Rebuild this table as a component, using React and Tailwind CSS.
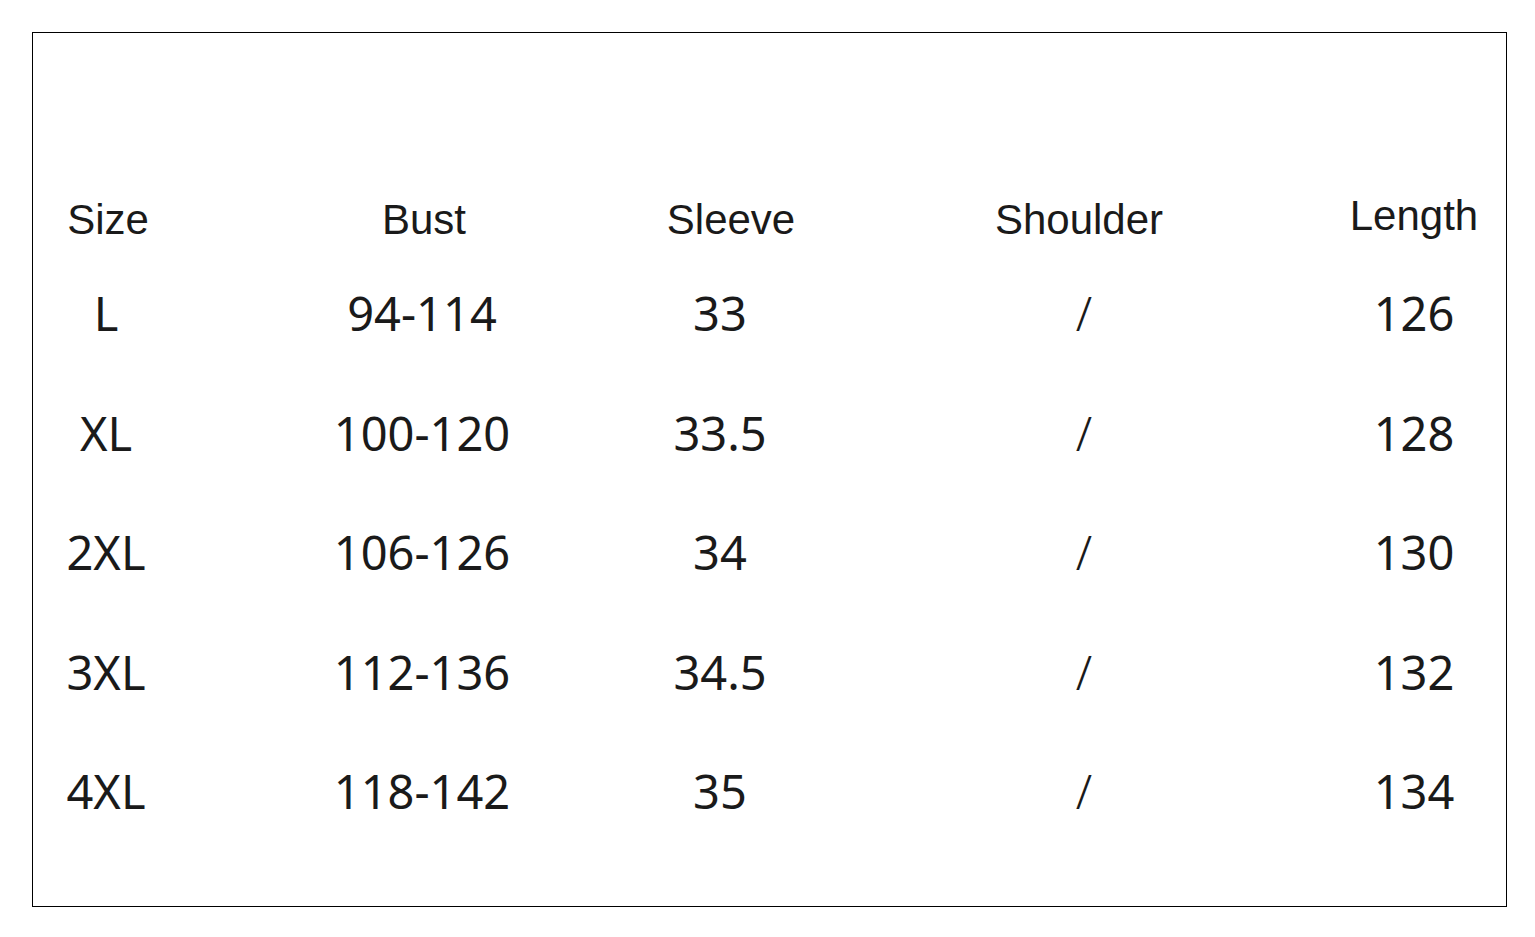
const headers = [
  { label: 'Size', cls: 'pl-[4px]' },
  { label: 'Bust', cls: 'pl-[4px]' },
  { label: 'Sleeve', cls: 'pl-[10px]' },
  { label: 'Shoulder', cls: 'pr-[4px]' },
  { label: 'Length', cls: '-translate-y-[4px]' },
];

const rows = [
  ['L', '94-114', '33', '/', '126'],
  ['XL', '100-120', '33.5', '/', '128'],
  ['2XL', '106-126', '34', '/', '130'],
  ['3XL', '112-136', '34.5', '/', '132'],
  ['4XL', '118-142', '35', '/', '134'],
];

// value offsets per column, to match the reference centers
const valueCls = ['', '', 'pr-[12px]', 'pl-[6px]', ''];

const cols = 'grid grid-cols-[150px_482px_126px_584px_82px] -ml-[2px]';

export default function App() {
  return (
    <div className="w-[1535px] h-[937px] bg-white pt-[32px] pl-[32px]">
      <div className="w-[1475px] h-[875px] border border-black pt-[166px]">
        <div className={`${cols} h-[42px] text-[42px] leading-[42px] text-[#1a1a1a]`} style={{ fontFamily: '"Liberation Sans", Arial, sans-serif' }}>
          {headers.map(h => (
            <div key={h.label} className={`flex justify-center whitespace-nowrap ${h.cls}`}>{h.label}</div>
          ))}
        </div>
        <div className="flex flex-col mt-[49px] gap-y-[72.5px]" style={{ fontFamily: '"Noto Sans", "Open Sans", sans-serif' }}>
          {rows.map(r => (
            <div key={r[0]} className={`${cols} h-[47px] text-[47px] leading-[47px] text-[#1a1a1a]`}>
              {r.map((v, i) => (
                <div key={i} className={`flex justify-center whitespace-nowrap ${valueCls[i]} ${i === 3 ? 'font-light' : ''}`}>{v}</div>
              ))}
            </div>
          ))}
        </div>
      </div>
    </div>
  );
}
